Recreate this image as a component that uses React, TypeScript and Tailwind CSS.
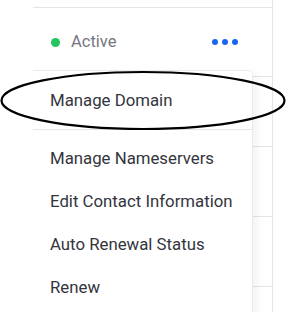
export default function App() {
  const items = ['Manage Nameservers', 'Edit Contact Information', 'Auto Renewal Status', 'Renew']

  return (
    <div className="relative w-[294px] h-[312px] overflow-hidden bg-white font-['Roboto',sans-serif]">
      {/* table behind */}
      <div className="ml-[33px] w-[240px] h-[312px] border-r border-[#e4e4ea]">
        <div className="h-[8px] border-b border-[#e4e4ea]" />
        <div className="h-[69px] border-b border-[#e4e4ea] flex items-center pl-[18px] pr-[34px]">
          <span className="w-[9px] h-[9px] rounded-full bg-[#22c55e]" />
          <span className="ml-[11px] text-[16.5px] text-[#767680]">Active</span>
          <div className="ml-auto flex items-center gap-[4px]">
            <span className="w-[6px] h-[6px] rounded-full bg-[#1a66f0]" />
            <span className="w-[6px] h-[6px] rounded-full bg-[#1a66f0]" />
            <span className="w-[6px] h-[6px] rounded-full bg-[#1a66f0]" />
          </div>
        </div>
        <div className="h-[70px] border-b border-[#e4e4ea]" />
        <div className="h-[70px] border-b border-[#e4e4ea]" />
        <div className="h-[70px] border-b border-[#e4e4ea]" />
      </div>

      {/* dropdown */}
      <div className="absolute left-[33px] top-[70px] w-[220px] h-[260px] bg-white border-t border-r border-[#ececf0] rounded-tr-[5px] shadow-[4px_3px_8px_rgba(0,0,0,0.05)]">
        <div className="h-[59px] flex items-center pt-[2px] pl-[17px] border-b border-[#e6e6ea] text-[16.8px] text-[#33353d]">
          Manage Domain
        </div>
        <div className="pt-[7px]">
          {items.map((item) => (
            <div key={item} className="h-[43px] flex items-center pt-[1px] pl-[17px] text-[16.8px] text-[#33353d]">
              {item}
            </div>
          ))}
        </div>
      </div>

      {/* annotation ellipse */}
      <svg className="absolute left-0 top-0 pointer-events-none" width="294" height="312">
        <ellipse cx="143" cy="100.5" rx="141.5" ry="28.5" fill="none" stroke="#000" strokeWidth="2.2" />
      </svg>
    </div>
  )
}
